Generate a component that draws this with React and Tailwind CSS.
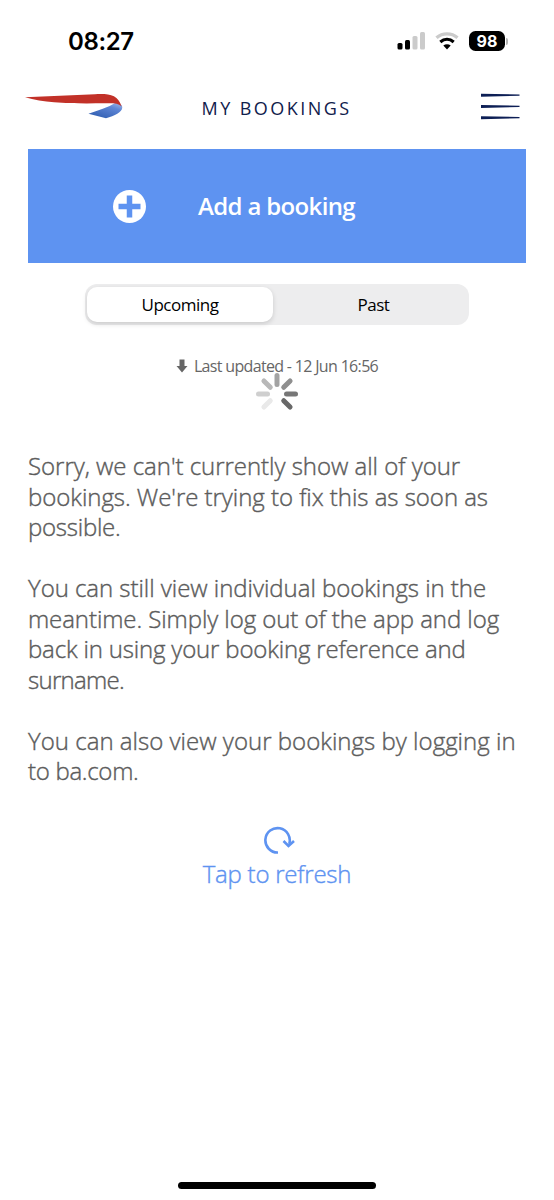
const PARAGRAPHS = [
  [
    { text: "Sorry, we can't currently show all of your", tracking: 'tracking-[-0.03px]' },
    { text: "bookings. We're trying to fix this as soon as", tracking: 'tracking-[-0.04px]' },
    { text: 'possible.', tracking: 'tracking-[-0.25px]' },
  ],
  [
    { text: 'You can still view individual bookings in the', tracking: 'tracking-[-0.04px]' },
    { text: 'meantime. Simply log out of the app and log', tracking: 'tracking-[-0.08px]' },
    { text: 'back in using your booking reference and', tracking: 'tracking-[-0.17px]' },
    { text: 'surname.', tracking: 'tracking-[-0.7px]' },
  ],
  [
    { text: 'You can also view your bookings by logging in', tracking: 'tracking-[0.02px]' },
    { text: 'to ba.com.', tracking: 'tracking-[-0.3px]' },
  ],
]

// Spokes are 45deg apart, one of them is always faded out
const SPOKES = [
  { angle: 0, color: '#a3a3a3' },
  { angle: 45, color: '#8f8f8f' },
  { angle: 90, color: '#777777' },
  { angle: 135, color: '#686868' },
  { angle: 225, color: '#e9e9e9' },
  { angle: 270, color: '#cfcfcf' },
  { angle: 315, color: '#b8b8b8' },
]

function StatusBar() {
  return (
    <div className="flex h-[82px] items-start justify-between pl-[68px] pr-[46px] pt-[27px]">
      <span className="font-[Inter] text-[24px] font-semibold leading-[29px] tracking-[-0.4px] text-black">08:27</span>
      <div className="flex items-center pt-1">
        <svg width="29" height="18" viewBox="0 0 29 18">
          <rect x="0.5" y="11" width="5" height="6.5" rx="1.5" fill="#000" />
          <rect x="8" y="8" width="5" height="9.5" rx="1.5" fill="#000" />
          <rect x="15.5" y="4" width="5" height="13.5" rx="1.5" fill="#cbcbcb" />
          <rect x="23" y="0" width="5" height="17.5" rx="1.5" fill="#cbcbcb" />
        </svg>
        <svg className="ml-[9px]" width="24" height="18" viewBox="0 0 24 18">
          <path d="M1.5 5.8C7.5 0.6 16.5 0.6 22.5 5.8" fill="none" stroke="#cbcbcb" strokeWidth="3.4" />
          <path d="M5.3 9.9C9.3 6.6 14.7 6.6 18.7 9.9" fill="none" stroke="#000" strokeWidth="3.2" />
          <path d="M8.3 13.6C10.5 11.8 13.5 11.8 15.7 13.6L12 17.4Z" fill="#000" />
        </svg>
        <div className="ml-[10px] flex h-[20px] w-[36px] items-center justify-center rounded-[6.5px] bg-black font-[Inter] text-[16px] font-bold leading-none text-white">
          98
        </div>
        <div className="ml-px h-[7px] w-[2px] rounded-r-full bg-[#b5b5b5]" />
      </div>
    </div>
  )
}

function Header() {
  return (
    <header className="flex h-[67px] items-start pl-[25px]">
      <svg className="mt-[11px]" width="98" height="26" viewBox="0 0 98 26">
        <defs>
          <linearGradient id="tail" x1="1" y1="0" x2="0.3" y2="1">
            <stop offset="0" stopColor="#a9bfe8" />
            <stop offset="0.35" stopColor="#5f86d6" />
            <stop offset="1" stopColor="#3260b2" />
          </linearGradient>
        </defs>
        <path d="M63.5 20.8C73 17.5 83 14.5 91 9.5L96.5 12C100 18 91 22.5 81 25.3Z" fill="url(#tail)" />
        <path d="M0 4.3L70 1.2C84 0.6 93 1.5 96.6 13.5C93 10 89 10.3 80 10.3C50 10.5 23 11 0 4.3Z" fill="#c23128" />
      </svg>
      <h1 className="ml-[78.5px] mt-[12px] w-[149.5px] whitespace-nowrap text-[18px] leading-[28px] tracking-[2.45px] text-[#10204c]">
        MY BOOKINGS
      </h1>
      <svg className="ml-[130px] mt-[11px]" width="39" height="27" viewBox="0 0 39 27" fill="#0d1f55">
        <path d="M0 0.7L38.5 1.5V2.8L0 3.7Z" />
        <path d="M0 11.9L38.5 12.7V14L0 14.9Z" />
        <path d="M0 23.2L38.5 24V25.3L0 26.2Z" />
      </svg>
    </header>
  )
}

function Spinner() {
  return (
    <svg width="44" height="44" viewBox="-22 -22 44 44">
      {SPOKES.map(s => (
        <line
          key={s.angle}
          x1="0"
          y1="-9.5"
          x2="0"
          y2="-18.5"
          stroke={s.color}
          strokeWidth="5"
          strokeLinecap="round"
          transform={`rotate(${s.angle})`}
        />
      ))}
    </svg>
  )
}

export default function App() {
  return (
    <div className="flex h-[1200px] w-[554px] flex-col overflow-hidden bg-white font-['Open_Sans',sans-serif]">
      <StatusBar />
      <Header />
      <main className="flex flex-col px-7">
        <button className="flex h-[114px] w-[498px] items-center bg-[#5e93f1] pl-[85px] text-white">
          <svg width="33" height="33" viewBox="0 0 33 33">
            <circle cx="16.5" cy="16.5" r="16.5" fill="#fff" />
            <path d="M16.5 5.5V27.5M5.5 16.5H27.5" stroke="#5e93f1" strokeWidth="5.5" />
          </svg>
          <span className="ml-[52px] text-[24px] font-semibold tracking-[-0.65px]">Add a booking</span>
        </button>

        <div className="mt-[21px] flex h-[41px] w-[384px] self-center rounded-[12px] bg-[#ededee] py-[3px] pl-[2px] pr-[3px] text-[17px] tracking-[-0.5px] text-black">
          <div className="flex w-[186px] items-center justify-center rounded-[10px] bg-white shadow-[0_2px_5px_rgba(0,0,0,0.15)]">Upcoming</div>
          <div className="flex flex-1 items-center justify-center pl-[8px]">Past</div>
        </div>

        <div className="relative mt-[28px] flex h-[26px] items-center justify-center gap-[6px] text-[16px] tracking-[-0.67px] text-[#666]">
          <svg width="12" height="14" viewBox="0 0 12 14" fill="#666">
            <path d="M3.5 0.5H8.5V7H11.5L6 13.5L0.5 7H3.5Z" />
          </svg>
          <span>Last updated - 12 Jun 16:56</span>
          {/* the spinner overlaps the bottom of the timestamp */}
          <div className="absolute left-[227px] top-[19px]">
            <Spinner />
          </div>
        </div>

        <div className="mt-[72px] flex flex-col gap-[30.55px] whitespace-nowrap text-[24px] font-light leading-[30.55px] text-[#5c5c5c] [-webkit-text-stroke:0.4px_#5c5c5c]">
          {PARAGRAPHS.map(lines => (
            <p key={lines[0].text}>
              {lines.map(l => (
                <span key={l.text} className={`block ${l.tracking}`}>{l.text}</span>
              ))}
            </p>
          ))}
        </div>

        <button className="mt-[39px] flex flex-col items-center text-[#5e93f1]">
          <svg className="ml-[4px]" width="33" height="29" viewBox="0 0 33 29" fill="none" stroke="currentColor" strokeWidth="2.6">
            <path d="M15 26.5A12.2 12.2 0 1 1 26.2 18" />
            <path d="M20.5 15L25.5 20L31 15" />
          </svg>
          <span className="mt-px text-[24px] font-light leading-[36px] tracking-[-0.23px] [-webkit-text-stroke:0.4px_#5e93f1]">
            Tap to refresh
          </span>
        </button>
      </main>
      <div className="mb-[11px] mt-auto h-[7px] w-[198px] self-center rounded-full bg-black" />
    </div>
  )
}
